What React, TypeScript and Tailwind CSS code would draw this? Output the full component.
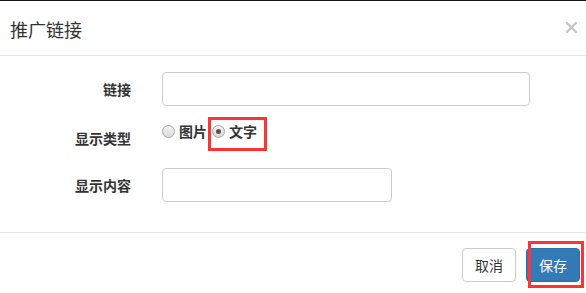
import React from "react";

const font = { fontFamily: '"Noto Sans CJK SC", "Liberation Sans", sans-serif' };

function Radio({ checked = false }: { checked?: boolean }) {
  return (
    <span className="relative inline-flex h-[13px] w-[13px] items-center justify-center rounded-full border border-[#a6a6a6] bg-gradient-to-b from-[#f4f4f4] to-[#d8d8d8]">
      {checked && <span className="h-[5px] w-[5px] rounded-full bg-[#555]" />}
    </span>
  );
}

export default function App() {
  return (
    <div className="h-[293px] w-[586px] overflow-hidden bg-white text-[#333]" style={font}>
      <div className="h-px bg-[#141414]" />

      {/* header */}
      <div className="flex h-[55px] items-start justify-between border-b border-[#e5e5e5] pl-[10px] pr-[9px] pt-[15px]">
        <h4 className="text-[18px] leading-[26px] text-[#333]">推广链接</h4>
        <svg className="mt-[6px]" width="11" height="11" viewBox="0 0 11 11" aria-label="close">
          <path d="M1 1 L10 10 M10 1 L1 10" stroke="#c6c6c6" strokeWidth="2.4" strokeLinecap="square" />
        </svg>
      </div>

      {/* body */}
      <div className="flex flex-col pt-[16px]">
        <div className="flex h-[34px] items-center">
          <label className="w-[131px] text-right text-[14px] font-bold leading-[20px]">链接</label>
          <input className="ml-[31px] h-[34px] w-[368px] rounded-[4px] border border-[#ccc] px-3 text-[14px] outline-none" />
        </div>

        <div className="mt-[15px] flex h-[32px] items-start">
          <label className="w-[131px] pt-[7px] text-right text-[14px] font-bold leading-[20px]">显示类型</label>
          <div className="relative ml-[31px] flex h-[20px] items-center text-[14px] font-bold">
            <span className="flex items-center gap-[4px]">
              <Radio />
              <span>图片</span>
            </span>
            <span className="ml-[5px] flex items-center gap-[4px]">
              <Radio checked />
              <span>文字</span>
            </span>
            <span className="absolute left-[46px] top-[-4px] h-[34px] w-[59px] border-[3px] border-[#f33]" />
          </div>
        </div>

        <div className="mt-[15px] flex h-[34px] items-center">
          <label className="w-[131px] text-right text-[14px] font-bold leading-[20px]">显示内容</label>
          <input className="ml-[31px] h-[34px] w-[230px] rounded-[4px] border border-[#ccc] px-3 text-[14px] outline-none" />
        </div>
      </div>

      {/* footer */}
      <div className="mt-[30px] flex justify-end gap-[10px] border-t border-[#e5e5e5] pr-[6px] pt-[15px]">
        <button className="h-[34px] w-[54px] rounded-[4px] border border-[#ccc] bg-white text-[14px] text-[#333]">取消</button>
        <div className="relative">
          <button className="h-[34px] w-[54px] rounded-[4px] border border-[#2e6da4] bg-[#337ab7] text-[14px] text-white">保存</button>
          <span className="absolute left-[2px] top-[-7px] h-[47px] w-[56px] border-[3px] border-[#f33]" />
        </div>
      </div>
    </div>
  );
}
